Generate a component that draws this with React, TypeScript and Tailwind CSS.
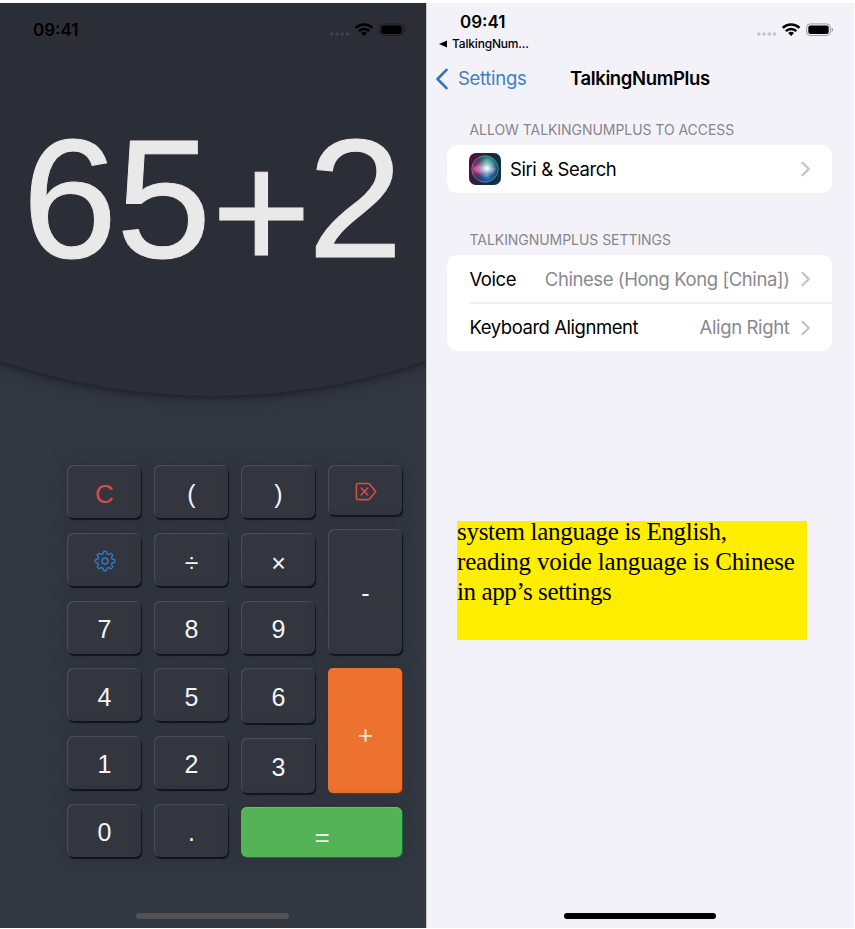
import type { ReactNode } from "react";

function StatusIcons({ dim = false }: { dim?: boolean }) {
  return (
    <svg width="78" height="16" viewBox="0 0 78 16" className="block">
      <g fill={dim ? "#41424a" : "#c3c3c8"}>
        <circle cx="2.8" cy="12" r="1.8" />
        <circle cx="8.1" cy="12" r="1.8" />
        <circle cx="13.3" cy="12" r="1.8" />
        <circle cx="18.5" cy="12" r="1.8" />
      </g>
      <g fill="none" stroke="#000" strokeWidth="2.5">
        <path d="M26.8 5.9a11.8 11.8 0 0 1 16.6 0" />
        <path d="M29.9 9.1a7.3 7.3 0 0 1 10.4 0" />
      </g>
      <path d="M32.2 11a4.3 4.3 0 0 1 5.8 0l-2.9 3z" fill="#000" />
      <rect x="50.7" y="1.9" width="23.6" height="11.6" rx="3.4" fill="none" stroke={dim ? "#1c1d23" : "#9d9da2"} />
      <rect x="52.3" y="3.5" width="20.4" height="8.4" rx="2" fill="#000" />
      <path d="M75.6 5.6c2 .8 2 3.6 0 4.4z" fill={dim ? "#1c1d23" : "#9d9da2"} />
    </svg>
  );
}

function Key({ className = "h-[53px]", children }: { className?: string; children: ReactNode }) {
  return (
    <button
      className={`flex w-[74px] shrink-0 items-center justify-center rounded-[6px] bg-[#33363f] pt-[4px] pl-px text-[25px] leading-none text-[#f4f4f6] shadow-[1px_2px_1px_#11121b,inset_1px_1px_1px_#4b4f5c,0_0_14px_4px_#30313b] ${className}`}
    >
      {children}
    </button>
  );
}

function GearIcon() {
  const steps = 160;
  const points = Array.from({ length: steps }, (_, i) => {
    const angle = (i * 2 * Math.PI) / steps;
    const radius = 8.6 + 1.25 * Math.tanh(2.2 * Math.cos(8 * angle));
    return `${(11 + radius * Math.sin(angle)).toFixed(2)},${(11 - radius * Math.cos(angle)).toFixed(2)}`;
  });
  return (
    <svg width="22" height="22" viewBox="0 0 22 22" fill="none" stroke="#2f78c4" strokeWidth="1.5" strokeLinejoin="round" className="block">
      <polygon points={points.join(" ")} />
      <circle cx="11" cy="11" r="3" />
    </svg>
  );
}

function DeleteIcon() {
  return (
    <svg width="22" height="20" viewBox="0 0 22 20" fill="none" stroke="#dc4a45" strokeWidth="1.6" strokeLinejoin="round" strokeLinecap="round" className="block">
      <path d="M3.2 1.5h9.8q.9 0 1.5.6l6.2 7.4-6.2 7.5q-.6.6-1.5.6H3.2q-1.8 0-1.8-1.8V3.3q0-1.8 1.8-1.8z" />
      <path d="M6.2 6l6.6 7M12.8 6l-6.6 7" />
    </svg>
  );
}

function Calculator() {
  return (
    <section className="relative flex h-[925px] w-[426px] flex-col overflow-hidden bg-[#313841] font-['Liberation_Sans',Arial,sans-serif]">
      <div className="absolute -top-[937px] left-[-452px] h-[1330px] w-[1330px] rounded-full bg-[#2c2e37] shadow-[0_2px_5px_#20212a,0_4px_14px_2px_#2d2e38]" />
      <header className="relative flex h-[54px] items-start justify-between pr-[19px] pl-[33px]">
        <span className="pt-[18px] font-['Inter',sans-serif] text-[17px] leading-[18px] font-semibold text-black">09:41</span>
        <div className="pt-[19px]"><StatusIcons dim /></div>
      </header>
      <div className="relative flex h-[408px] justify-end pr-[23px]">
        <span className="h-[192px] origin-right scale-x-[1.018] pt-[46px] text-[168px] leading-[192px] text-[#e9e9e9] [-webkit-text-stroke:1px_#e9e9e9]">
          <span className="tracking-[-1px]">65</span><span className="-mr-[3.5px] ml-[1px] inline-block translate-y-[13px]">+</span>2
        </span>
      </div>
      <div className="relative flex h-[392px] gap-[13px] pl-[67px]">
        <div className="flex flex-col justify-between">
          <Key><span className="text-[26px] text-[#dc4a45]">C</span></Key>
          <Key><GearIcon /></Key>
          <Key>7</Key>
          <Key><span className="pt-px">4</span></Key>
          <Key>1</Key>
          <Key>0</Key>
        </div>
        <div className="flex flex-col justify-between">
          <Key><span className="pt-[2px]">(</span></Key>
          <Key><span className="pt-[5px]">÷</span></Key>
          <Key>8</Key>
          <Key><span className="pt-px">5</span></Key>
          <Key>2</Key>
          <Key>.</Key>
        </div>
        <div className="flex flex-col justify-between">
          <div className="flex h-[328px] gap-[13px]">
            <div className="flex flex-col justify-between">
              <Key><span className="pt-[2px]">)</span></Key>
              <Key><span className="pt-[5px]">×</span></Key>
              <Key>9</Key>
              <Key className="h-[55px]">6</Key>
              <Key className="h-[55px]">3</Key>
            </div>
            <div className="flex flex-col justify-between">
              <Key className="h-[50px]"><DeleteIcon /></Key>
              <Key className="h-[125px]">-</Key>
              <button className="flex h-[125px] w-[74px] items-center justify-center rounded-[5px] bg-[#ee722f] pt-[9px] pl-px text-[26px] leading-none text-[#fbe3d6] shadow-[1px_1px_1px_#7d3613,0_0_14px_4px_#30313b]">+</button>
            </div>
          </div>
          <button className="flex h-[50px] w-[161px] items-center justify-center rounded-[6px] bg-[#54b257] pt-[9px] pl-px text-[26px] leading-none text-[#e5f5e4] shadow-[inset_0_1px_1px_#6fc06c,1px_1px_1px_#087a36,0_0_14px_4px_#30313b]">=</button>
        </div>
      </div>
      <div className="relative mt-[56px] ml-[136px] h-[6px] w-[153px] rounded-full bg-[#535357]" />
    </section>
  );
}

function Chevron() {
  return (
    <svg width="10" height="16" viewBox="0 0 10 16" fill="none" stroke="#c1c1c5" strokeWidth="2" className="ml-[11px] block">
      <path d="M1.4 1.8L7.8 8l-6.4 6.2" strokeLinecap="round" strokeLinejoin="round" />
    </svg>
  );
}

function SiriIcon() {
  return (
    <svg width="32" height="32" viewBox="0 0 32 32" className="mr-[9px] block">
      <defs>
        <linearGradient id="siriBase" x1="0" y1="0.1" x2="1" y2="0.5">
          <stop offset="0" stopColor="#5a0f35" />
          <stop offset="0.5" stopColor="#24223d" />
          <stop offset="1" stopColor="#0b3346" />
        </linearGradient>
        <radialGradient id="siriPink" cx="0.2" cy="0.5" r="0.42">
          <stop offset="0" stopColor="#e8458f" />
          <stop offset="1" stopColor="#a51c66" stopOpacity="0" />
        </radialGradient>
        <radialGradient id="siriTeal" cx="0.6" cy="0.2" r="0.55">
          <stop offset="0" stopColor="#32a591" />
          <stop offset="1" stopColor="#1b8a80" stopOpacity="0" />
        </radialGradient>
        <radialGradient id="siriBlue" cx="0.6" cy="0.75" r="0.55">
          <stop offset="0" stopColor="#2a80d8" />
          <stop offset="1" stopColor="#1556a8" stopOpacity="0" />
        </radialGradient>
        <radialGradient id="siriCore" cx="0.57" cy="0.47" r="0.38">
          <stop offset="0" stopColor="#fff" />
          <stop offset="0.25" stopColor="#eef6fb" stopOpacity="0.8" />
          <stop offset="1" stopColor="#a8d8f0" stopOpacity="0" />
        </radialGradient>
      </defs>
      <rect width="32" height="32" rx="7" fill="url(#siriBase)" />
      <circle cx="16" cy="16" r="13.5" fill="url(#siriTeal)" />
      <circle cx="16" cy="16" r="13.5" fill="url(#siriBlue)" />
      <circle cx="16" cy="16" r="13.5" fill="url(#siriPink)" />
      <path d="M4 16q5-7 13-1q7-2 10 1q-4 6-10 1q-8 6-13-1z" fill="#b58ad8" opacity="0.4" />
      <path d="M18 17l7 5q-3 3-5 2z" fill="#123760" opacity="0.6" />
      <circle cx="16" cy="16" r="13.5" fill="url(#siriCore)" />
      <circle cx="16" cy="16" r="13.2" fill="none" stroke="#6f98a5" strokeWidth="0.9" opacity="0.8" />
    </svg>
  );
}

function Settings() {
  return (
    <section className="flex h-[925px] w-[427px] flex-col bg-[#f3f2f8] font-['Inter',sans-serif] text-black">
      <header className="flex h-[53px] justify-between pr-[20px]">
        <div className="pl-[12px]">
          <div className="mt-[10px] pl-[21px] text-[17px] leading-[18px] font-semibold">09:41</div>
          <div className="mt-[5px] flex items-center text-[12px] leading-[16px] font-medium tracking-[-0.18px] whitespace-nowrap">
            <svg width="9" height="8" viewBox="0 0 9 8" className="mr-[4px]"><path d="M0 4L8 .4v7.2z" /></svg>
            TalkingNum...
          </div>
        </div>
        <div className="pt-[19px]"><StatusIcons /></div>
      </header>
      <nav className="flex h-[45px] items-center pl-[9px]">
        <svg width="13" height="22" viewBox="0 0 13 22" fill="none" stroke="#3673b8" strokeWidth="2.6" strokeLinecap="round" strokeLinejoin="round">
          <path d="M10.5 1.8L1.5 11l9 9.2" />
        </svg>
        <span className="ml-[9px] w-[112px] text-[18.5px] tracking-[-0.3px] text-[#4080c4]">Settings</span>
        <h1 className="text-[18.5px] font-semibold tracking-[-0.37px]">TalkingNumPlus</h1>
      </nav>
      <h2 className="mt-[19px] pl-[42.5px] text-[14px] leading-[20px] tracking-[-0.05px] text-[#87868c]">ALLOW TALKINGNUMPLUS TO ACCESS</h2>
      <div className="mt-[5px] ml-[20px] flex h-[48px] w-[385px] items-center rounded-[11px] bg-white pr-[21.5px] pl-[22px] text-[18.5px] tracking-[-0.42px]">
        <SiriIcon />
        <span className="flex-1 pt-[2px]">Siri &amp; Search</span>
        <Chevron />
      </div>
      <h2 className="mt-[37px] pl-[42.5px] text-[14px] leading-[20px] tracking-[-0.05px] text-[#87868c]">TALKINGNUMPLUS SETTINGS</h2>
      <div className="mt-[5px] ml-[20px] flex h-[96px] w-[385px] flex-col rounded-[11px] bg-white pl-[22px] text-[18.5px] tracking-[-0.45px]">
        <div className="flex h-[49px] items-center border-b-2 border-[#efeff1] pt-[1px] pr-[21.5px]">
          <span className="flex-1 pt-[2px] pl-[0.5px]">Voice</span>
          <span className="pt-[2px] tracking-[-0.43px] text-[#8a898e]">Chinese (Hong Kong [China])</span>
          <Chevron />
        </div>
        <div className="flex h-[47px] items-center pr-[21.5px]">
          <span className="flex-1 pt-px pl-[0.5px]">Keyboard Alignment</span>
          <span className="pt-px tracking-[-0.36px] text-[#8a898e]">Align Right</span>
          <Chevron />
        </div>
      </div>
      <div className="mt-[170px] ml-[30px] h-[119px] w-[350px] bg-[#ffee00] font-['Liberation_Serif',serif] text-[25px] leading-[30px] tracking-[-0.16px] whitespace-nowrap">
        <div className="-mt-[4px] tracking-[-0.3px]">system language is English,</div>
        <div>reading voide language is Chinese</div>
        <div className="tracking-[-0.4px]">in app’s settings</div>
      </div>
      <div className="mt-auto mb-[9px] ml-[136.5px] h-[6px] w-[152.5px] rounded-full bg-black" />
    </section>
  );
}

export default function App() {
  return (
    <main className="flex h-[929px] w-[855px] bg-white pt-[3px]">
      <Calculator />
      <div className="h-[925px] w-px bg-[#c9c9ce]" />
      <Settings />
    </main>
  );
}
